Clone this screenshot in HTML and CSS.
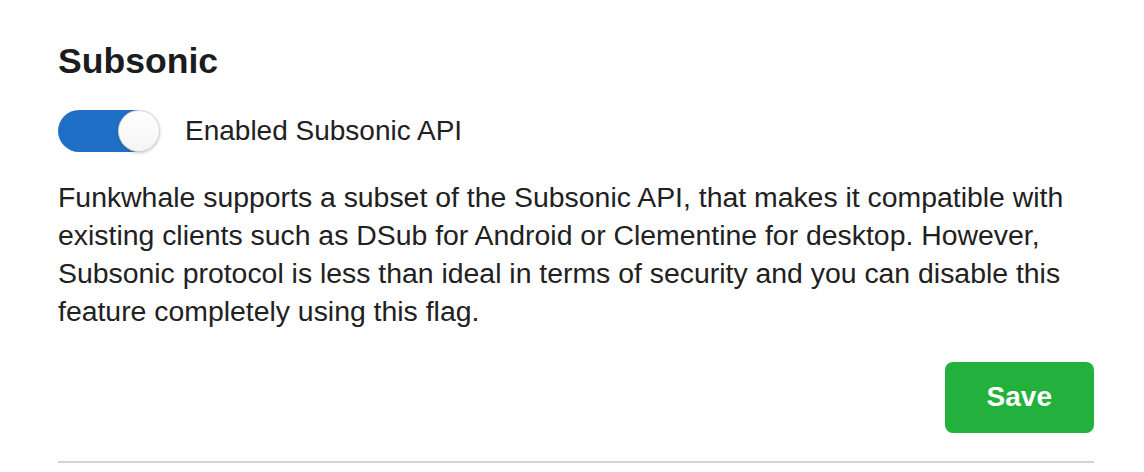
FILE: index.html
```html
<!DOCTYPE html>
<html lang="en">

<head>
    <meta charset="UTF-8">
    <meta name="viewport" content="width=device-width, initial-scale=1.0">
    <title>Subsonic</title>
    <link rel="stylesheet" href="styles.css">
</head>

<body>
    <div class="settings">
        <h2 class="title">Subsonic</h2>
        <label class="toggle-row">
            <span class="toggle"><span class="knob"></span></span>
            <span class="toggle-label">Enabled Subsonic API</span>
        </label>
        <p class="help">
            Funkwhale supports a subset of the Subsonic API, that makes it compatible with
            existing clients such as DSub for Android or Clementine for desktop. However,
            Subsonic protocol is less than ideal in terms of security and you can disable this
            feature completely using this flag.
        </p>
        <div class="actions">
            <button class="save">Save</button>
        </div>
        <div class="divider"></div>
    </div>
</body>

</html>
```

FILE: styles.css
```css
body {
    margin: 0;
    background: #fff;
    font-family: "Liberation Sans", Arial, sans-serif;
    color: #212121;
}

.settings {
    width: 1036px;
    padding: 41px 0 0 58px;
}

.title {
    margin: 0;
    font-size: 35.6px;
    line-height: 40px;
    font-weight: bold;
    color: #1b1c1d;
}

.toggle-row {
    display: flex;
    align-items: center;
    margin-top: 29px;
    height: 42px;
}

.toggle {
    position: relative;
    width: 98px;
    height: 42px;
    border-radius: 21px;
    background: #1f6fc7;
}

.knob {
    position: absolute;
    top: 0;
    left: 60px;
    width: 42px;
    height: 42px;
    border-radius: 50%;
    background: linear-gradient(#fff, #f4f4f4);
    box-shadow: 0 1px 3px rgba(34, 36, 38, 0.25), inset 0 0 0 1px rgba(34, 36, 38, 0.18);
}

.toggle-label {
    margin-left: 29px;
    font-size: 28px;
    line-height: 38px;
}

.help {
    margin: 26px 0 0;
    font-size: 28.4px;
    line-height: 38px;
}

.actions {
    display: flex;
    justify-content: flex-end;
    margin-top: 32px;
}

.save {
    padding: 21px 42px 22px;
    border: none;
    border-radius: 8px;
    background: #22b13c;
    color: #fff;
    font-family: "Liberation Sans", Arial, sans-serif;
    font-size: 28px;
    line-height: 28px;
    font-weight: bold;
}

.divider {
    margin-top: 28px;
    height: 2px;
    background: #d4d4d5;
}
```
